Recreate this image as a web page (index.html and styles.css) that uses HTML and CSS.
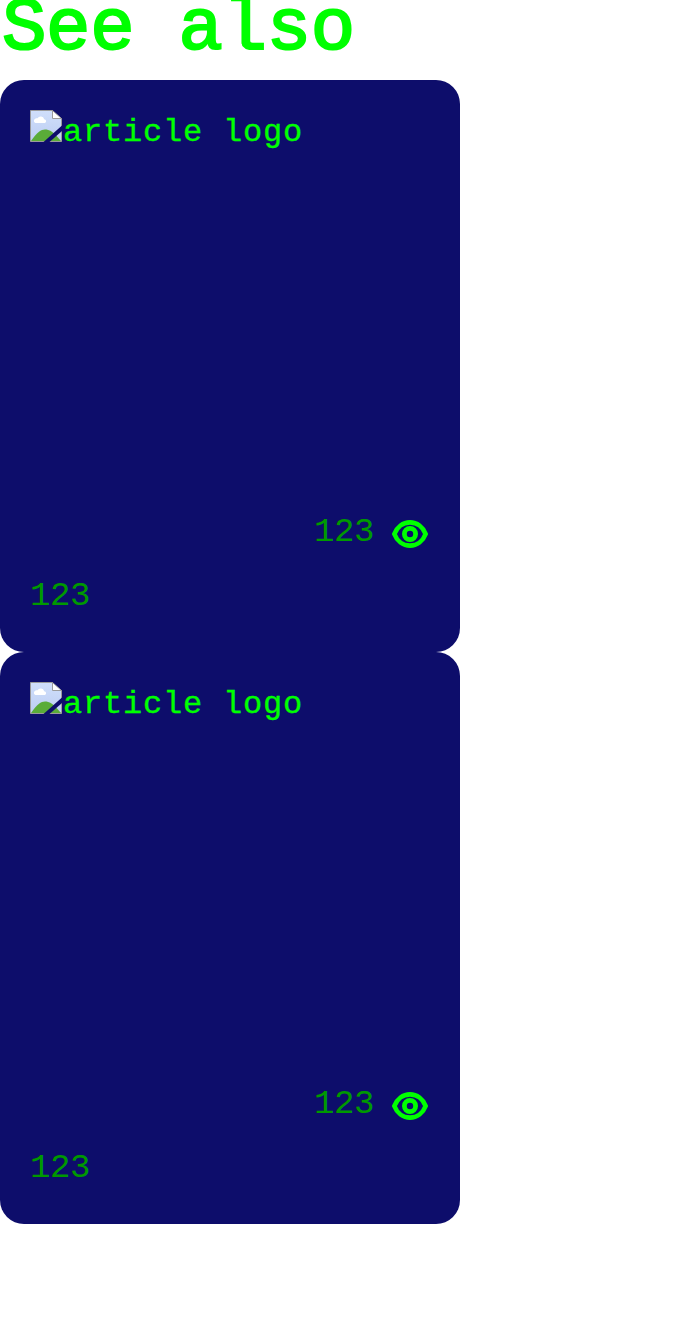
FILE: index.html
```html
<!DOCTYPE html>
<html lang="en">
<head>
<meta charset="utf-8">
<title>See also</title>
<link rel="stylesheet" href="styles.css">
</head>
<body>
<svg class="defs" width="0" height="0" aria-hidden="true">
  <symbol id="broken" viewBox="0 0 32 32">
    <linearGradient id="sky" x1="0" y1="0" x2="0" y2="1"><stop offset="0" stop-color="#d0dffb"/><stop offset="1" stop-color="#bccdf2"/></linearGradient>
    <path fill="url(#sky)" d="M.5 .5H22.5L31.5 9V31.5H.5z"/>
    <path fill="#fff" d="M22.5 .5L31.5 8.5H22.5zM5.500 13a2.300 2.300 0 0 1-.3-4.300c.8-.5 1.500-.6 2.300-.5a3.700 3.700 0 0 1 6.700 1A2 2 0 0 1 15 13z"/>
    <path fill="#5aac38" d="M1 31C7 22 11 19.500 15 19.500s8 1.500 16 11.500z"/>
    <path fill="none" stroke="#9b9b9b" d="M31.500 31.500H.5V.5H22.500L31.500 8.500V31.500M22.500 .5V8.500H31.500"/>
    <path fill="#0d0d6b" d="M13.500 32L32 15.500V21L19.500 32z"/>
  </symbol>
  <symbol id="eye" viewBox="0 0 36 28">
    <path fill="none" stroke="#0f0" stroke-width="4.700" stroke-linejoin="round" d="M2.350 14C5 7 11 2.400 18 2.400S31 7 33.650 14C31 21 25 25.600 18 25.600S5 21 2.350 14z"/>
    <circle cx="18" cy="14" r="5.600" fill="none" stroke="#0f0" stroke-width="4.800"/>
  </symbol>
</svg>
<h2 class="title">See also</h2>
<main class="list">
  <article class="card">
    <div class="logo"><svg class="broken"><use href="#broken"/></svg><span class="alt">article logo</span></div>
    <div class="views"><span>123</span><svg class="eye"><use href="#eye"/></svg></div>
    <div class="name">123</div>
  </article>
  <article class="card">
    <div class="logo"><svg class="broken"><use href="#broken"/></svg><span class="alt">article logo</span></div>
    <div class="views"><span>123</span><svg class="eye"><use href="#eye"/></svg></div>
    <div class="name">123</div>
  </article>
</main>
</body>
</html>
```
FILE: styles.css
```css
* { box-sizing: border-box; }
body {
  margin: 0;
  background: #fff;
  color: #0f0;
  font-family: "Liberation Mono", monospace;
}
.defs { display: block; }
.title {
  height: 80px;
  margin: 0;
  padding-left: 2px;
  font-size: 74px;
  font-weight: 400;
  line-height: 58px;
  letter-spacing: -.3px;
  white-space: nowrap;
  -webkit-text-stroke: 2.2px #0f0;
}
.card {
  display: flex;
  flex-direction: column;
  width: 460px;
  height: 572px;
  padding: 30px;
  border-radius: 24px;
  background: #0d0d6b;
}
.logo {
  display: flex;
  height: 400px;
  font-size: 32px;
  line-height: 46px;
}
.broken { width: 32px; height: 32px; }
.alt {
  padding-left: 1px;
  letter-spacing: .8px;
  -webkit-text-stroke: .3px #0f0;
}
.views {
  display: flex;
  justify-content: flex-end;
  height: 64px;
  padding-right: 2px;
}
.views,
.name {
  color: #009900;
  font-size: 34px;
  line-height: 44px;
  letter-spacing: -.4px;
}
.eye {
  width: 36px;
  height: 28px;
  margin: 10px 0 0 18px;
}
```
